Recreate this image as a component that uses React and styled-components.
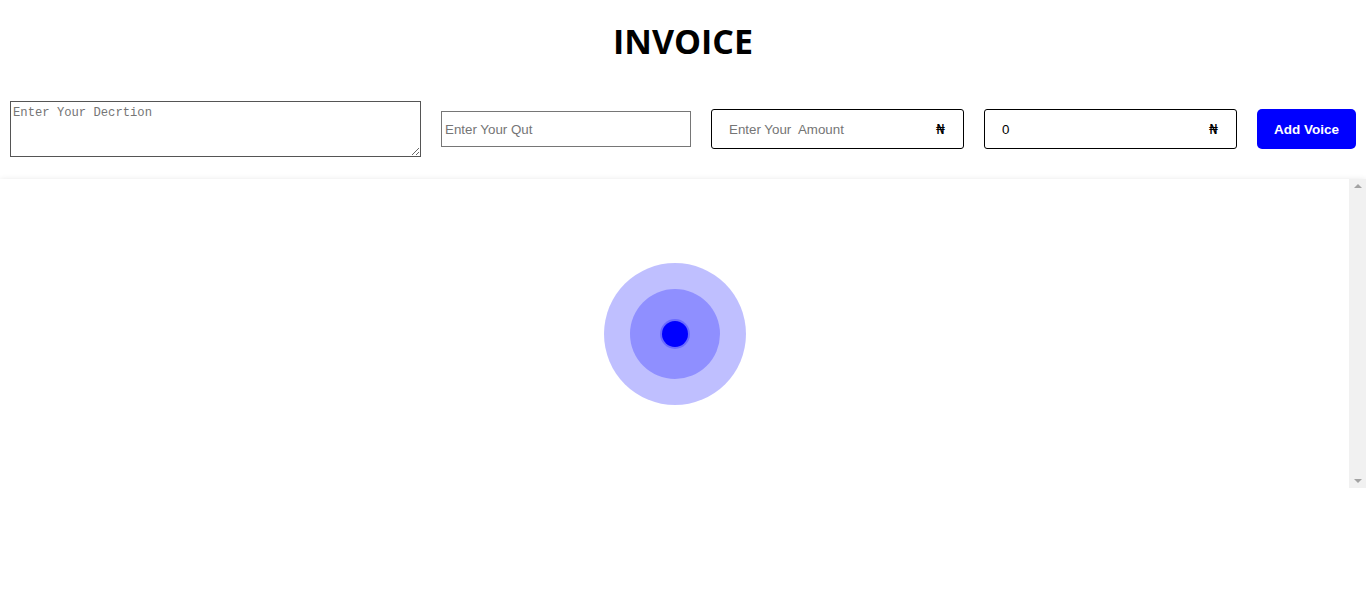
import styled, { createGlobalStyle } from "styled-components";

const GlobalStyle = createGlobalStyle`
  body {
    margin: 0;
    background: #fff;
    font-family: "Liberation Sans", Arial, sans-serif;
  }
`;

const Page = styled.div`
  display: flex;
  flex-direction: column;
`;

const Title = styled.h1`
  margin: 21px 0 0;
  height: 41px;
  line-height: 41px;
  text-align: center;
  font-family: "Open Sans", "Noto Sans", sans-serif;
  font-size: 34px;
  font-weight: 700;
  color: #000;
`;

const FormRow = styled.form`
  display: flex;
  align-items: center;
  gap: 20px;
  padding: 0 10px;
  margin-top: 39px;
`;

const Description = styled.textarea`
  box-sizing: border-box;
  width: 411px;
  height: 56px;
  border: 1px solid #555;
  padding: 4px 2px 2px;
  font-family: "Liberation Mono", monospace;
  font-size: 12.2px;
  resize: both;

  &::placeholder {
    color: #757575;
  }
`;

const Qty = styled.input`
  box-sizing: border-box;
  width: 250px;
  height: 36px;
  border: 1px solid #767676;
  padding: 0 3px;
  font-family: "Liberation Sans", Arial, sans-serif;
  font-size: 13.33px;

  &::placeholder {
    color: #757575;
  }
`;

const MoneyBox = styled.label`
  box-sizing: border-box;
  display: flex;
  align-items: center;
  width: 253px;
  height: 40px;
  border: 1px solid #000;
  border-radius: 3px;
  padding: 0 18px 0 17px;
`;

const MoneyInput = styled.input`
  flex: 1;
  min-width: 0;
  border: none;
  outline: none;
  padding: 0;
  background: transparent;
  font-family: "Liberation Sans", Arial, sans-serif;
  font-size: 13.33px;
  color: #000;

  &::placeholder {
    color: #757575;
  }
`;

const Naira = styled.span`
  font-family: "DejaVu Sans", sans-serif;
  font-size: 14px;
  font-weight: 400;
  color: #000;
`;

const AddButton = styled.button`
  box-sizing: border-box;
  width: 99px;
  height: 40px;
  border: none;
  border-radius: 5px;
  background: #0000ff;
  color: #fff;
  font-family: "Liberation Sans", Arial, sans-serif;
  font-size: 13.5px;
  font-weight: 700;
  cursor: pointer;
`;

const Panel = styled.section`
  margin-top: 22px;
  height: 309px;
  display: flex;
  box-shadow: 0 1px 6px rgba(0, 0, 0, 0.12);
`;

const PanelBody = styled.div`
  flex: 1;
  display: flex;
  align-items: center;
  justify-content: center;
`;

const Scrollbar = styled.div`
  width: 17px;
  background: #f1f1f1;
  display: flex;
  flex-direction: column;
  justify-content: space-between;
  align-items: center;
  padding: 5px 0;
  box-sizing: border-box;
`;

const Arrow = styled.span`
  width: 0;
  height: 0;
  border-left: 4px solid transparent;
  border-right: 4px solid transparent;
  ${(p) =>
    p.down
      ? "border-top: 4px solid #a3a3a3;"
      : "border-bottom: 4px solid #a3a3a3;"}
`;

const Ring = styled.div`
  display: flex;
  align-items: center;
  justify-content: center;
  width: ${(p) => p.size}px;
  height: ${(p) => p.size}px;
  border-radius: 50%;
  background: ${(p) => p.color};
`;

const App = () => {
  return (
    <Page>
      <GlobalStyle />
      <Title>INVOICE</Title>
      <FormRow onSubmit={(e) => e.preventDefault()}>
        <Description placeholder="Enter Your Decrtion" />
        <Qty type="text" placeholder="Enter Your Qut" />
        <MoneyBox>
          <MoneyInput type="text" placeholder="Enter Your  Amount" />
          <Naira>₦</Naira>
        </MoneyBox>
        <MoneyBox>
          <MoneyInput type="text" defaultValue="0" readOnly />
          <Naira>₦</Naira>
        </MoneyBox>
        <AddButton type="submit">Add Voice</AddButton>
      </FormRow>
      <Panel>
        <PanelBody>
          <Ring size={142} color="rgba(0, 0, 255, 0.25)">
            <Ring size={90} color="rgba(0, 0, 255, 0.25)">
              <Ring size={30} color="rgba(0, 0, 255, 0.25)">
                <Ring size={26} color="#0000ff" />
              </Ring>
            </Ring>
          </Ring>
        </PanelBody>
        <Scrollbar>
          <Arrow />
          <Arrow down />
        </Scrollbar>
      </Panel>
    </Page>
  );
};

export default App;
